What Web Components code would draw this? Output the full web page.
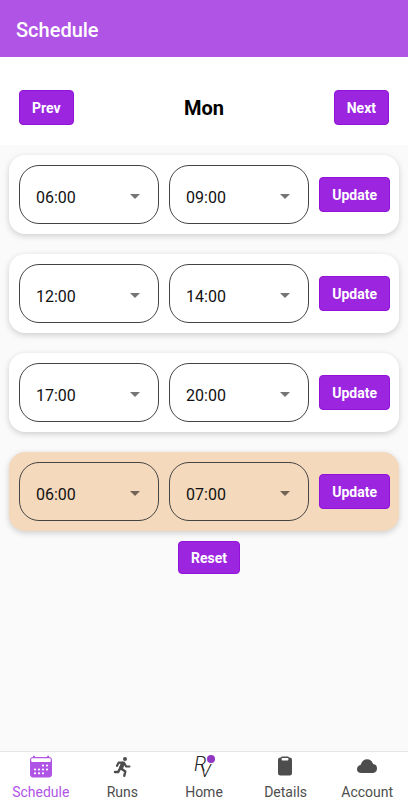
<!DOCTYPE html>
<html lang="en">
<head>
<meta charset="utf-8">
<meta name="viewport" content="width=device-width, initial-scale=1">
<title>Schedule</title>
<style>
  body { margin: 0; font-family: Roboto, "Liberation Sans", sans-serif; color: #000; background: #fafafa; }
</style>
</head>
<body>
<schedule-app></schedule-app>

<template id="app-template">
  <style>
    :host { display: flex; flex-direction: column; min-height: 100vh; }
    main { flex: 1; display: flex; flex-direction: column; }
    .slots { display: flex; flex-direction: column; gap: 20px; padding: 10px 9px; }
    .reset { display: flex; justify-content: center; padding-left: 10px; }
    svg { overflow: visible; }
  </style>
  <app-header>Schedule</app-header>
  <main>
    <day-bar>Mon</day-bar>
    <div class="slots">
      <time-slot from="06:00" to="09:00"></time-slot>
      <time-slot from="12:00" to="14:00"></time-slot>
      <time-slot from="17:00" to="20:00"></time-slot>
      <time-slot from="06:00" to="07:00" highlighted></time-slot>
    </div>
    <div class="reset"><action-button compact>Reset</action-button></div>
  </main>
  <tab-bar>
    <tab-item href="#schedule" active>
      <svg slot="icon" width="24" height="24" viewBox="0 0 24 24" fill="currentColor" aria-hidden="true">
        <path d="M4 2V.8h1.8V2h12.400V.8H20V2c1.700 0 3 1.200 3 2.900v14.700c0 1.700-1.300 2.900-3 2.900H4c-1.700 0-3-1.200-3-2.900V4.900C1 3.200 2.300 2 4 2z"/>
        <g fill="#fff"><rect x="2.200" y="3.200" width="19.600" height="3.800" rx="1.200"/><circle cx="14" cy="10.500" r="1.100"/><circle cx="18" cy="10.500" r="1.100"/><circle cx="6" cy="14.500" r="1.100"/><circle cx="10" cy="14.500" r="1.100"/><circle cx="14" cy="14.500" r="1.100"/><circle cx="18" cy="14.500" r="1.100"/><circle cx="6" cy="18.300" r="1.100"/><circle cx="10" cy="18.300" r="1.100"/><circle cx="14" cy="18.300" r="1.100"/></g>
      </svg>
      Schedule
    </tab-item>
    <tab-item href="#runs">
      <svg slot="icon" width="24" height="24" viewBox="0 0 24 24" aria-hidden="true">
        <circle cx="15" cy="4" r="2" fill="currentColor"/>
        <g fill="none" stroke="currentColor" stroke-linecap="round" stroke-linejoin="round">
          <path stroke-width="4.200" d="M12.700 9 11 13"/>
          <path stroke-width="2.200" d="M7 10.800 8.600 7.700 14 7.700 16 11.300 19.400 11.500"/>
          <path stroke-width="2.400" d="M11.500 13.800 15.300 16.500 14.300 20.800M9.400 14.500 8.300 17 5 17"/>
        </g>
      </svg>
      Runs
    </tab-item>
    <tab-item href="#home">
      <svg slot="icon" width="24" height="24" viewBox="0 0 24 24" font-family="Roboto, sans-serif" font-weight="300" font-style="italic" aria-hidden="true">
        <text x="2" y="16" font-size="20" fill="#222">R</text>
        <text x="8" y="22" font-size="18" fill="#222">V</text>
        <circle cx="19" cy="4" r="4" fill="#9137c4"/>
      </svg>
      Home
    </tab-item>
    <tab-item href="#details">
      <svg slot="icon" width="24" height="24" viewBox="0 0 24 24" fill="currentColor" aria-hidden="true">
        <path fill-rule="evenodd" d="M7 2.500Q7.300 1.500 8.300 1.500h5.400q1 0 1.300 1h.7q2.300 0 2.300 2.200v13.600q0 2.200-2.300 2.200H6.300Q4 20.500 4 18.300V4.700q0-2.200 2.300-2.200zM8.400 3q-.8 0-.8.8v.9q0 .8.8.8h5.200q.8 0 .8-.8v-.9q0-.8-.8-.8z"/>
      </svg>
      Details
    </tab-item>
    <tab-item href="#account">
      <svg slot="icon" width="24" height="24" viewBox="0 0 24 24" fill="currentColor" aria-hidden="true">
        <path d="M6.500 18Q2 18 2 14.200q0-3.200 3.600-4.100Q7.300 4.200 12 4.200q4.600 0 6.100 4.900 3.900.5 3.900 4.400T18 18z"/>
      </svg>
      Account
    </tab-item>
  </tab-bar>
</template>

<script>
  const hours = Array.from({ length: 24 }, (_, h) => String(h).padStart(2, '0') + ':00');

  class AppHeader extends HTMLElement {
    constructor() {
      super();
      this.attachShadow({ mode: 'open' }).innerHTML = `
        <style>
          :host { display: block; background: #b054e6; color: #fff; padding: 18px 16px 15px; }
          h1 { margin: 0; font-size: 20px; line-height: 24px; font-weight: 500; }
        </style>
        <header><h1><slot></slot></h1></header>`;
    }
  }

  class ActionButton extends HTMLElement {
    constructor() {
      super();
      this.attachShadow({ mode: 'open' }).innerHTML = `
        <style>
          :host { display: block; flex: none; }
          button {
            display: block; margin: 0; padding: 10px 12px 8px;
            border: 1px solid #9312d8; border-radius: 4px;
            background: #9c25e0; color: #fff;
            font: 700 14px/15px Roboto, "Liberation Sans", sans-serif;
            white-space: nowrap; cursor: pointer;
          }
          :host([compact]) button { padding: 9px 12px 7px; }
        </style>
        <button type="button"><slot></slot></button>`;
    }
  }

  class DayBar extends HTMLElement {
    constructor() {
      super();
      this.attachShadow({ mode: 'open' }).innerHTML = `
        <style>
          :host { display: grid; grid-template-columns: 1fr auto 1fr; align-items: center; padding: 33px 19px 20px; background: #fff; }
          h2 { margin: 0; font-size: 20px; line-height: 24px; font-weight: 700; }
          .prev { justify-self: start; }
          .next { justify-self: end; }
        </style>
        <action-button class="prev">Prev</action-button>
        <h2><slot></slot></h2>
        <action-button class="next">Next</action-button>`;
    }
  }

  class TimeSelect extends HTMLElement {
    constructor() {
      super();
      this.attachShadow({ mode: 'open' });
    }
    connectedCallback() {
      const value = this.getAttribute('value');
      this.shadowRoot.innerHTML = `
        <style>
          :host { display: grid; min-width: 0; align-items: center; }
          select, svg { grid-area: 1 / 1; }
          select {
            appearance: none; box-sizing: border-box; width: 100%; margin: 0;
            padding: 23px 32px 16px 16px;
            border: 1px solid #444; border-radius: 20px; background: transparent; color: #111;
            font: 400 16px/18px Roboto, "Liberation Sans", sans-serif;
          }
          svg { justify-self: end; margin: 4px 19px 0 0; pointer-events: none; }
        </style>
        <select aria-label="${this.getAttribute('label')}">
          ${hours.map(h => `<option${h === value ? ' selected' : ''}>${h}</option>`).join('')}
        </select>
        <svg width="10" height="5" viewBox="0 0 10 5" aria-hidden="true"><path d="M0 0h10L5 5z" fill="#000" fill-opacity=".54"/></svg>`;
    }
  }

  class TimeSlot extends HTMLElement {
    constructor() {
      super();
      this.attachShadow({ mode: 'open' });
    }
    connectedCallback() {
      this.shadowRoot.innerHTML = `
        <style>
          :host {
            display: grid; grid-template-columns: 1fr 1fr auto; align-items: center; gap: 10px;
            padding: 10px 9px 10px 10px; border-radius: 16px; background: #fff;
            box-shadow: 0 2px 6px rgba(0, 0, 0, .18);
          }
          :host([highlighted]) { background: #f5d9bc; }
        </style>
        <time-select label="Start time" value="${this.getAttribute('from')}"></time-select>
        <time-select label="End time" value="${this.getAttribute('to')}"></time-select>
        <action-button>Update</action-button>`;
    }
  }

  class TabBar extends HTMLElement {
    constructor() {
      super();
      this.attachShadow({ mode: 'open' }).innerHTML = `
        <style>
          :host { display: block; position: sticky; bottom: 0; background: #fff; border-top: 1px solid #e6e6e6; }
          nav { display: grid; grid-template-columns: repeat(5, 1fr); }
        </style>
        <nav><slot></slot></nav>`;
    }
  }

  class TabItem extends HTMLElement {
    constructor() {
      super();
      this.attachShadow({ mode: 'open' });
    }
    connectedCallback() {
      const active = this.hasAttribute('active');
      this.shadowRoot.innerHTML = `
        <style>
          :host { display: block; }
          a {
            display: flex; flex-direction: column; align-items: center; gap: 5px; padding: 3px 0 0;
            color: #4d4d4d; font-size: 14px; line-height: 16px; text-decoration: none;
          }
          :host([active]) a { color: #b054e6; }
          ::slotted(svg) { display: block; }
        </style>
        <a href="${this.getAttribute('href')}"${active ? ' aria-current="page"' : ''}><slot name="icon"></slot><span><slot></slot></span></a>`;
    }
  }

  class ScheduleApp extends HTMLElement {
    constructor() {
      super();
      const template = document.getElementById('app-template');
      this.attachShadow({ mode: 'open' }).append(template.content.cloneNode(true));
    }
  }

  customElements.define('app-header', AppHeader);
  customElements.define('action-button', ActionButton);
  customElements.define('day-bar', DayBar);
  customElements.define('time-select', TimeSelect);
  customElements.define('time-slot', TimeSlot);
  customElements.define('tab-bar', TabBar);
  customElements.define('tab-item', TabItem);
  customElements.define('schedule-app', ScheduleApp);
</script>
</body>
</html>
